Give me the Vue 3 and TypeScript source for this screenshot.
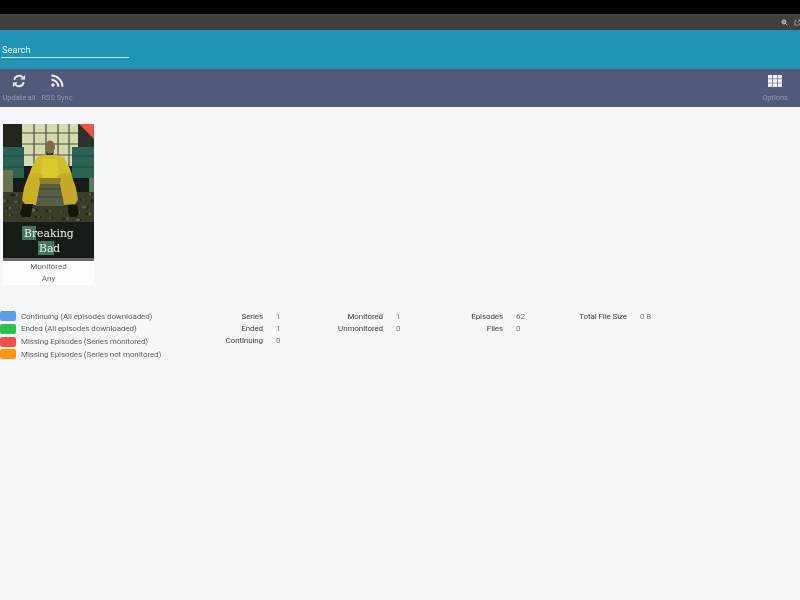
<template>
  <div class="page">
    <div class="blackbar"></div>
    <div class="topbar">
      <svg class="tiny" viewBox="0 0 12 12" fill="none" stroke="#e0e0e0" stroke-width="1.5">
        <circle cx="5" cy="5" r="3.4" />
        <path d="M7.6 7.6L11 11M3.4 5h3.2M5 3.4v3.2" stroke-width="1.2" />
      </svg>
      <svg class="tiny" viewBox="0 0 12 12" fill="none" stroke="#a8a8a8" stroke-width="1.3">
        <path d="M9 7v3.5H1.5V3H5M6 6l4.5-4.5M7.5 1.5h3v3" />
      </svg>
    </div>

    <header class="searchbar">
      <div class="search">Search</div>
    </header>

    <nav class="toolbar">
      <div class="actions">
        <button v-for="a in leftActions" :key="a.label" class="action">
          <svg v-if="a.icon === 'sync'" class="icon" viewBox="0 0 16 16" fill="none">
            <path d="M2.6 6.6A5.6 5.6 0 0 1 12.2 3.8" stroke="#e8ebf0" stroke-width="2.2" />
            <path d="M15 1v5.4H9.6z" fill="#e8ebf0" />
            <path d="M13.4 9.4A5.6 5.6 0 0 1 3.8 12.2" stroke="#e8ebf0" stroke-width="2.2" />
            <path d="M1 15V9.6h5.4z" fill="#e8ebf0" />
          </svg>
          <svg v-else class="icon" viewBox="0 0 16 16" fill="none" stroke="#e8ebf0" stroke-width="2.3">
            <circle cx="3.4" cy="12.6" r="2" fill="#e8ebf0" stroke="none" />
            <path d="M1.5 6.6a8 8 0 0 1 8 8" />
            <path d="M1.5 1.8a12.8 12.8 0 0 1 12.8 12.8" />
          </svg>
          <span>{{ a.label }}</span>
        </button>
      </div>
      <button class="action options">
        <svg class="icon" viewBox="0 0 15 13" preserveAspectRatio="none" fill="#f1f3f6">
          <template v-for="r in [0, 4.5, 9]" :key="r">
            <rect v-for="c in [0, 5.2, 10.4]" :key="c" :x="c" :y="r" width="4.5" height="3.9" />
          </template>
        </svg>
        <span>Options</span>
      </button>
    </nav>

    <main class="content">
      <section class="posters">
        <article class="card">
          <svg class="poster" viewBox="0 0 91 137">
            <defs>
              <filter id="soft" x="0" y="0" width="100%" height="100%"><feGaussianBlur stdDeviation="0.6" /></filter>
            </defs>
            <g filter="url(#soft)">
              <rect width="91" height="134" fill="#191d1a" />
              <!-- window -->
              <rect x="19" y="0" width="56" height="42" fill="#d6dab0" />
              <path d="M19 9h56M19 20h56M19 31h56M31 0v42M43 0v42M55 0v42M66 0v42" stroke="#4b5140" stroke-width="1.2" />
              <rect x="0" y="0" width="19" height="26" fill="#20261f" />
              <rect x="75" y="0" width="16" height="26" fill="#2c3229" />
              <!-- barrels -->
              <rect x="0" y="23" width="21" height="31" fill="#2a6353" />
              <rect x="69" y="23" width="22" height="31" fill="#2a6353" />
              <path d="M0 32h21M0 43h21M69 32h22M69 43h22" stroke="#1c463a" stroke-width="1" />
              <rect x="0" y="46" width="10" height="25" fill="#6a7350" />
              <rect x="86" y="54" width="5" height="24" fill="#5d7752" />
              <!-- floor -->
              <rect x="0" y="68" width="91" height="30" fill="#3a3d2c" />
              <ellipse
                v-for="(d, i) in debris"
                :key="i"
                :cx="d.x"
                :cy="d.y"
                :rx="d.r"
                :ry="d.r * 0.6"
                :fill="d.c"
              />
              <rect x="0" y="98" width="91" height="36" fill="#181a12" />
              <!-- chair -->
              <rect x="33" y="58" width="28" height="24" fill="#565f44" />
              <path d="M34 65h26M34 73h26" stroke="#39412e" stroke-width="1.2" />
              <!-- figure -->
              <path d="M34 33q13-5 27 0l6 12 2 6-7 6-7-5-15 0-7 5-7-5 2-7z" fill="#cfc02a" />
              <path d="M40 35h14l2 19H38z" fill="#d9ca32" />
              <path d="M26 50q8-3 14 2l-3 8-4 21-11-1-3-4 2-12z" fill="#c9b028" />
              <path d="M68 50q-8-3-14 2l3 8 4 21 11-1 3-4-2-12z" fill="#c4aa25" />
              <path d="M36 54h22l-1 6H37z" fill="#8e7f2a" />
              <path d="M20 80h10l-1 6-2 7h-7l-3-3zM65 81h9l2 9-3 3h-6l-2-5z" fill="#12130d" />
              <ellipse cx="47" cy="23" rx="5" ry="6.5" fill="#7c6b4e" />
              <path d="M43 27q4 5 8 0l-1 4h-6z" fill="#2b2519" />
            </g>
            <path d="M76 0h15v15z" fill="#ef5350" />
            <rect x="19" y="102" width="14" height="14" fill="#47755f" />
            <rect x="35" y="117" width="16" height="14" fill="#47755f" />
            <text x="21" y="112.5" class="title">Breaking</text>
            <text x="36" y="128" class="title">Bad</text>
            <rect y="134" width="91" height="3" fill="#6b6e69" />
          </svg>
          <div class="meta">Monitored</div>
          <div class="meta">Any</div>
        </article>
      </section>

      <section class="footer">
        <ul class="legend">
          <li v-for="l in legend" :key="l.text">
            <i :style="{ background: l.color }"></i>{{ l.text }}
          </li>
        </ul>
        <div class="stats">
          <dl v-for="(col, i) in stats" :key="i" class="stat-col" :class="{ wide: i === 3 }">
            <template v-for="s in col" :key="s[0]">
              <dt>{{ s[0] }}</dt>
              <dd>{{ s[1] }}</dd>
            </template>
          </dl>
        </div>
      </section>
    </main>
  </div>
</template>

<script setup lang="ts">
const leftActions = [
  { label: 'Update all', icon: 'sync' },
  { label: 'RSS Sync', icon: 'rss' }
]

const legend = [
  { text: 'Continuing (All episodes downloaded)', color: '#5d9cec' },
  { text: 'Ended (All episodes downloaded)', color: '#27c24c' },
  { text: 'Missing Episodes (Series monitored)', color: '#f05050' },
  { text: 'Missing Episodes (Series not monitored)', color: '#ff9800' }
]

const stats: [string, string][][] = [
  [['Series', '1'], ['Ended', '1'], ['Continuing', '0']],
  [['Monitored', '1'], ['Unmonitored', '0']],
  [['Episodes', '62'], ['Files', '0']],
  [['Total File Size', '0 B']]
]

// rubble on the floor of the poster
const debris = Array.from({ length: 60 }, (_, i) => ({
  x: (i * 37) % 91,
  y: 70 + ((i * 23) % 27),
  r: 1.2 + (i % 3) * 0.8,
  c: ['#55583e', '#2a2c1f', '#65684c', '#23251a'][i % 4]
}))
</script>

<style scoped>
.page {
  height: 600px;
  overflow: hidden;
  display: flex;
  flex-direction: column;
  background: #f5f7fa;
  font-family: Roboto, "Liberation Sans", sans-serif;
  filter: blur(0.35px);
}

.blackbar {
  height: 14px;
  background: #000;
}

.topbar {
  height: 16px;
  background: #404040;
  display: flex;
  align-items: center;
  justify-content: flex-end;
  gap: 6px;
  margin-right: -1px;
}

.tiny {
  width: 7px;
  height: 7px;
}

.searchbar {
  height: 39px;
  background: #2193b5;
  padding-top: 13px;
  box-sizing: border-box;
}

.search {
  width: 128px;
  margin-left: 1px;
  height: 15px;
  padding-left: 1px;
  box-sizing: border-box;
  border-bottom: 1px solid #b5edf7;
  color: #eef9fb;
  font-size: 9.3px;
  line-height: 14px;
}

.toolbar {
  height: 38px;
  background: #515a78;
  display: flex;
  justify-content: space-between;
  padding: 5px 8px 0 0;
  box-sizing: border-box;
}

.actions {
  display: flex;
}

.action {
  background: none;
  border: 0;
  padding: 0;
  width: 38px;
  display: flex;
  flex-direction: column;
  align-items: center;
  font: inherit;
  font-size: 7.5px;
  letter-spacing: -0.05px;
  color: #8f98af;
}

.action span {
  margin-top: 5px;
  white-space: nowrap;
}

.icon {
  width: 14px;
  height: 14px;
}

.options {
  width: 34px;
}

.options .icon {
  height: 12px;
  margin: 1px 0;
}

.content {
  flex: 1;
  padding-top: 17px;
}

.posters {
  padding-left: 3px;
}

.card {
  width: 91px;
  background: #fdfdfe;
  text-align: center;
  color: #666;
  font-size: 8px;
}

.poster {
  display: block;
  width: 91px;
  height: 137px;
}

.title {
  font-family: "DejaVu Serif", "Liberation Serif", serif;
  font-size: 10.8px;
  fill: #f0f0e6;
}

.meta {
  height: 12px;
  line-height: 12px;
}

.footer {
  display: flex;
  margin-top: 25px;
  font-size: 8px;
  letter-spacing: -0.1px;
  color: #666;
}

.legend {
  list-style: none;
  margin: 0;
  padding: 0;
  width: 203px;
  color: #666;
}

.legend li {
  display: flex;
  align-items: center;
  height: 12.67px;
  white-space: nowrap;
}

.legend i {
  width: 16px;
  height: 10px;
  border-radius: 2px;
  margin-right: 5px;
  flex: none;
}

.stats {
  display: flex;
  padding-top: 1px;
}

.stat-col {
  display: grid;
  grid-template-columns: 60px 47px;
  column-gap: 13px;
  grid-auto-rows: 12px;
  align-content: start;
  margin: 0;
}

.stat-col.wide {
  grid-template-columns: 64px 47px;
}

dt {
  text-align: right;
  color: #444;
  white-space: nowrap;
  line-height: 12px;
}

dd {
  margin: 0;
  color: #777;
  line-height: 12px;
}
</style>
